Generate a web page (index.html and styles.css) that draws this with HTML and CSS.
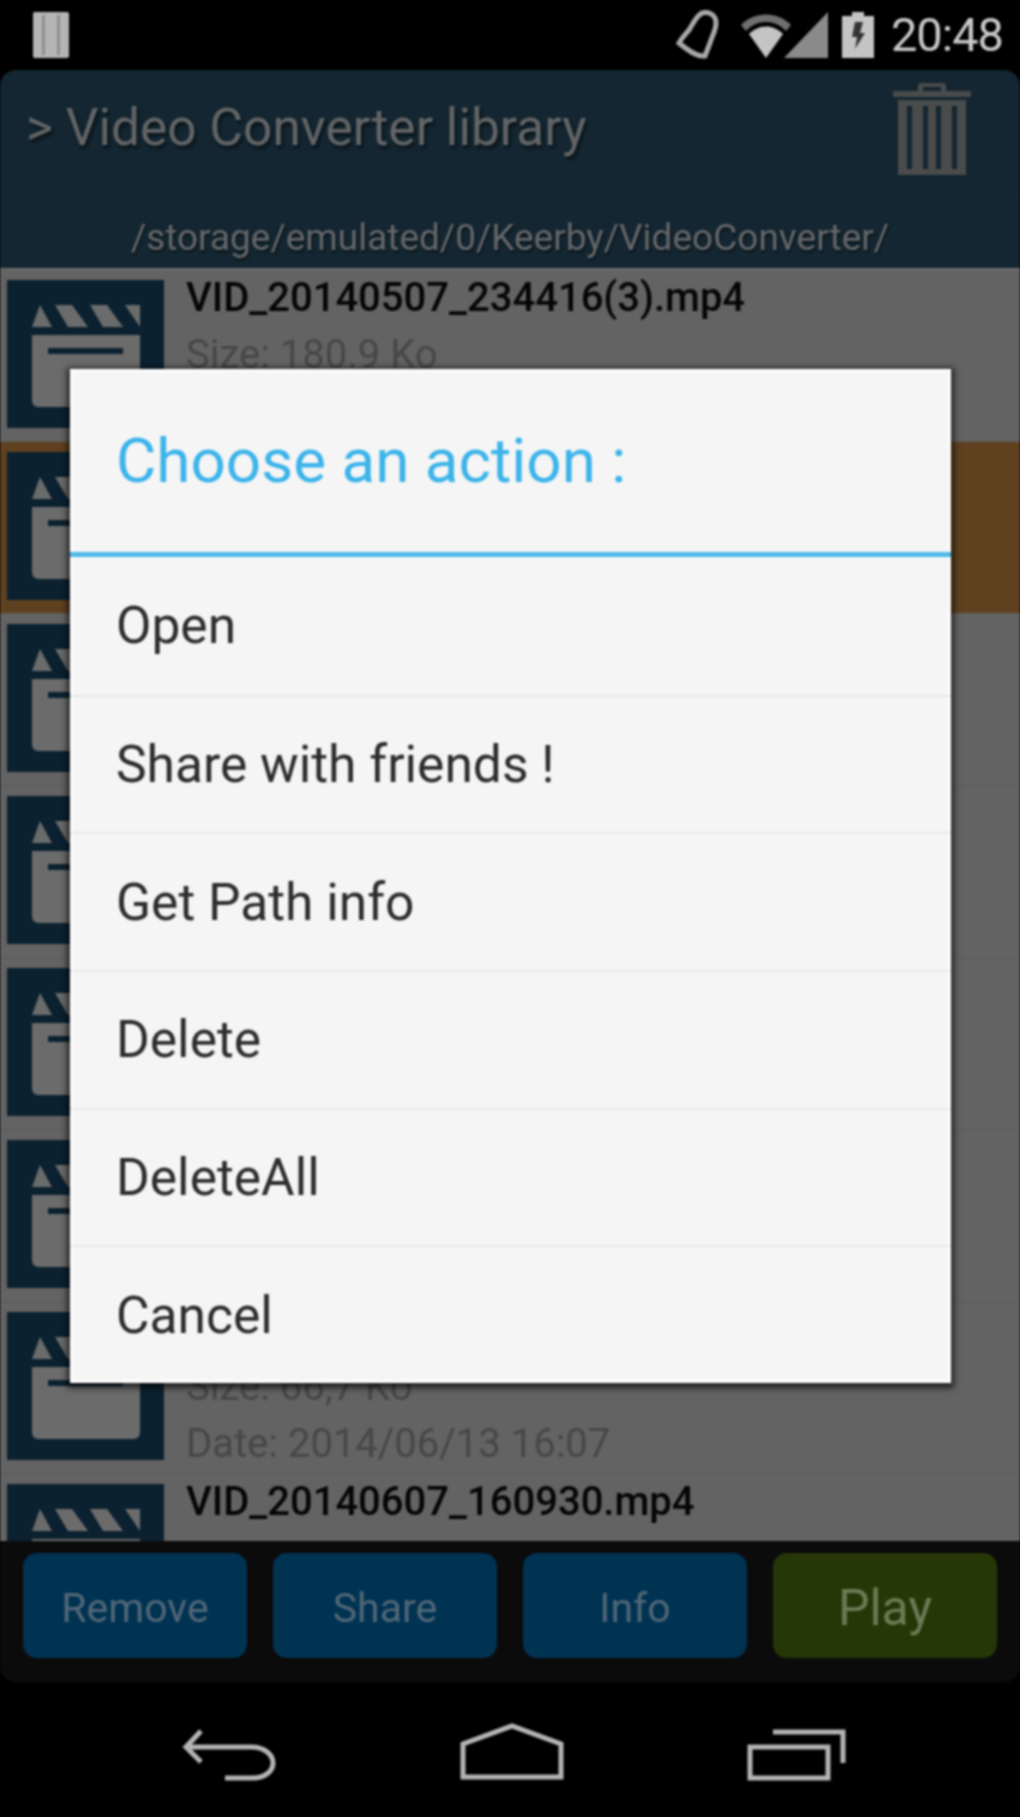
FILE: index.html
```html
<!DOCTYPE html>
<html lang="en">
<head>
<meta charset="utf-8">
<title>Video Converter library</title>
<link rel="stylesheet" href="styles.css">
</head>
<body>
<svg class="defs" width="0" height="0" aria-hidden="true">
  <symbol id="clapper" viewBox="0 0 157 148">
    <path class="clap-ink" d="M33 25 25 47H45ZM48 25H65L81 47H61ZM83 25H100L116 47H96ZM118 25H133V47Z"/>
    <path class="clap-ink" fill-rule="evenodd" d="M25 55H133V120Q133 127 126 127H32Q25 127 25 120ZM41 68V74H116V68Z"/>
  </symbol>
</svg>
<div class="phone">
  <div class="status">
    <svg class="st-note" width="36" height="46" viewBox="0 0 36 46"><path class="st-note-body" d="M2 0H34Q36 0 36 2V44Q36 46 34 46H2Q0 46 0 44V2Q0 0 2 0Z"/><path class="st-dark" d="M9 3H12V43H9ZM24 3H27V43H24Z"/></svg>
    <div class="st-right">
      <svg width="46" height="50" viewBox="0 0 46 50"><path class="st-line" d="M28 3C35 1 42 5 42 13C42 20 38 26 36 33L31 46C24 47 16 42 5 33C8 27 12 24 15 20C19 14 22 6 28 3Z"/></svg>
      <svg class="st-wifi" width="52" height="46" viewBox="0 0 52 46"><path class="st-dim" d="M1 13C14 -1 38 -1 51 13L46 19C35 7 17 7 6 19Z"/><path class="st-fill" d="M9 22C19 12 33 12 43 22L26 46Z"/></svg>
      <svg class="st-signal" width="44" height="46" viewBox="0 0 44 46"><path class="st-grad" d="M44 0V46H0Z"/></svg>
      <svg width="32" height="46" viewBox="0 0 32 46"><path class="st-fill" d="M10 0H22V4H32V46H0V4H10Z"/><path class="st-black" d="M13 10H21L18 21H23L13 37L15 25H10Z"/></svg>
      <span class="time">20:48</span>
    </div>
  </div>

  <div class="header">
    <div class="head-top">
      <h1 class="head-title">&gt; Video Converter library</h1>
      <svg class="trash" width="80" height="92" viewBox="0 0 80 92"><path class="trash-ink" fill-rule="evenodd" d="M26 8V3Q26 0 29 0H51Q54 0 54 3V8H79V14H1V8ZM31 8H49V4H31Z"/><path class="trash-ink" fill-rule="evenodd" d="M6 17H74V92H6ZM15 23V86H20V23ZM31 23V86H36V23ZM44 23V86H49V23ZM60 23V86H65V23Z"/></svg>
    </div>
    <div class="head-path">/storage/emulated/0/Keerby/VideoConverter/</div>
  </div>

  <div class="list">
    <div class="row">
      <svg class="thumb"><use href="#clapper"/></svg>
      <div class="meta">
        <div class="name">VID_20140507_234416(3).mp4</div>
        <div class="info">Size: 180.9 Ko</div>
      </div>
    </div>
    <div class="row row-on"><svg class="thumb"><use href="#clapper"/></svg></div>
    <div class="row"><svg class="thumb"><use href="#clapper"/></svg></div>
    <div class="row"><svg class="thumb"><use href="#clapper"/></svg></div>
    <div class="row"><svg class="thumb"><use href="#clapper"/></svg></div>
    <div class="row"><svg class="thumb"><use href="#clapper"/></svg></div>
    <div class="row">
      <svg class="thumb"><use href="#clapper"/></svg>
      <div class="meta">
        <div class="name"></div>
        <div class="info">Size: 66,7 Ko</div>
        <div class="info">Date: 2014/06/13 16:07</div>
      </div>
    </div>
    <div class="row">
      <svg class="thumb"><use href="#clapper"/></svg>
      <div class="meta">
        <div class="name">VID_20140607_160930.mp4</div>
      </div>
    </div>
  </div>

  <div class="toolbar">
    <div class="btn">Remove</div>
    <div class="btn">Share</div>
    <div class="btn">Info</div>
    <div class="btn btn-play">Play</div>
  </div>

  <div class="nav">
    <svg width="96" height="52" viewBox="0 0 96 52"><path class="nav-line" d="M20 2 5 18 20 33M6 18H70C84 18 92 26 92 34C92 42 84 49 72 49H44"/></svg>
    <svg width="104" height="58" viewBox="0 0 104 58"><path class="nav-line" d="M3 54V21L52 3 101 21V54Z"/></svg>
    <svg width="99" height="52" viewBox="0 0 99 52"><path class="nav-line" d="M3 18H81V49H3ZM26 3H96V34"/></svg>
  </div>

  <div class="dialog">
    <div class="dlg-title">Choose an action :</div>
    <div class="dlg-items">
      <div class="dlg-item">Open</div>
      <div class="dlg-item">Share with friends !</div>
      <div class="dlg-item">Get Path info</div>
      <div class="dlg-item">Delete</div>
      <div class="dlg-item">DeleteAll</div>
      <div class="dlg-item">Cancel</div>
    </div>
  </div>
</div>
</body>
</html>
```
FILE: styles.css
```css
* { box-sizing: border-box; }
html, body { margin: 0; background: #000; }
.defs { position: absolute; }
.phone {
  position: relative;
  width: 1020px;
  height: 1817px;
  display: flex;
  flex-direction: column;
  overflow: hidden;
  background: #000;
  font-family: Roboto, "Liberation Sans", sans-serif;
  filter: blur(1.2px);
}

/* status bar */
.status {
  height: 70px;
  flex: none;
  display: flex;
  justify-content: space-between;
  align-items: center;
  padding: 0 17px 0 33px;
}
.st-right { display: flex; align-items: center; }
.st-right svg { display: block; }
.st-wifi { margin-left: 20px; }
.st-signal { margin-left: -8px; }
.st-signal + svg { margin-left: 14px; }
.st-fill { fill: #c4c4c4; }
.st-note-body { fill: #b4b4b4; }
.st-dark { fill: #8f8f8f; }
.st-dim { fill: #6f6f6f; }
.st-black { fill: #333; }
.st-grad { fill: #8a8a8a; }
.st-line { fill: none; stroke: #a8a8a8; stroke-width: 5; }
.time { margin-left: 17px; color: #c9c9c9; font-size: 47px; line-height: 46px; letter-spacing: -1px; }

/* header */
.header {
  height: 198px;
  flex: none;
  background: #132631;
  border-radius: 16px 16px 0 0;
  display: flex;
  flex-direction: column;
}
.head-top {
  height: 127px;
  flex: none;
  display: flex;
  justify-content: space-between;
  padding: 13px 48px 0 26px;
  border-bottom: 1px solid #182a35;
}
.head-title {
  margin: 0;
  font-weight: 400;
  font-size: 51.5px;
  line-height: 90px;
  color: #636566;
  text-shadow: 2px 3px 3px #0a1318;
}
.trash { display: block; }
.trash-ink { fill: #4a4b4b; }
.head-path {
  flex: 1;
  display: flex;
  align-items: center;
  justify-content: center;
  padding-top: 10px;
  font-size: 37px;
  color: #66686a;
  text-shadow: 1px 2px 2px #0a1318;
}

/* file list */
.list {
  height: 1273px;
  flex: none;
  overflow: hidden;
  background: #636363;
  border-top: 2px solid #6d6d6d;
}
.row {
  height: 172px;
  display: flex;
  gap: 22px;
  padding: 10px 0 0 7px;
  border-bottom: 1px solid #5d5d5d;
}
.row-on { background: #5f411f; border-bottom-color: #636363; }
.thumb { width: 157px; height: 148px; flex: none; background: #0b2130; display: block; }
.clap-ink { fill: #6b6b6b; }
.meta { display: flex; flex-direction: column; margin-top: -10px; }
.name { height: 56px; font-size: 40px; line-height: 56px; color: #050505; font-weight: 500; }
.info { height: 57px; font-size: 40px; line-height: 57px; color: #474747; }

/* bottom buttons */
.toolbar {
  height: 141px;
  flex: none;
  display: flex;
  gap: 26px;
  padding: 12px 23px 24px;
  background: #0b0b0b;
  border-radius: 0 0 16px 16px;
}
.btn {
  flex: 1;
  display: flex;
  align-items: center;
  justify-content: center;
  padding-top: 4px;
  background: #003252;
  border-radius: 14px;
  color: #516777;
  font-size: 41px;
}
.btn-play { background: #263707; color: #6c7b56; font-size: 50px; }

/* navigation bar */
.nav {
  flex: 1;
  display: flex;
  align-items: flex-end;
  gap: 183px;
  padding: 0 0 36px 181px;
}
.nav svg { display: block; }
.nav-line { fill: none; stroke: #b4b4b4; stroke-width: 5; }

/* dialog */
.dialog {
  position: absolute;
  left: 70px;
  top: 369px;
  width: 881px;
  height: 1014px;
  display: flex;
  flex-direction: column;
  background: #f5f5f5;
  box-shadow: 0 2px 6px 3px rgba(0,0,0,.65), inset 0 0 0 3px #fdfdfd;
}
.dlg-title {
  height: 188px;
  flex: none;
  display: flex;
  align-items: center;
  padding: 0 46px;
  border-bottom: 5px solid #4fb9e8;
  color: #3cb4ea;
  font-size: 62px;
}
.dlg-items { flex: 1; display: grid; grid-auto-rows: 1fr; }
.dlg-item {
  display: flex;
  align-items: center;
  padding: 0 46px;
  color: #2c2c2c;
  font-size: 51.5px;
  border-top: 2px solid #e9e9e9;
}
.dlg-item:first-child { border-top: 0; }
```
